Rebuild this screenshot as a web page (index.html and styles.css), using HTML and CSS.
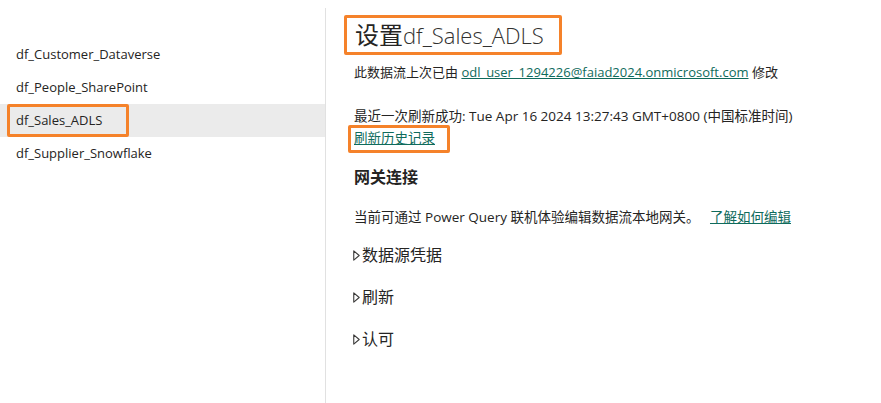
FILE: index.html
```html
<!DOCTYPE html>
<html lang="zh">
<head>
<meta charset="utf-8">
<link rel="stylesheet" href="styles.css">
</head>
<body>
<div class="page">
  <nav class="sidebar">
    <div class="item">df_Customer_Dataverse</div>
    <div class="item">df_People_SharePoint</div>
    <div class="item selected"><span class="hl">df_Sales_ADLS</span></div>
    <div class="item">df_Supplier_Snowflake</div>
  </nav>
  <main class="content">
    <h1 class="title"><span class="hl-title"><span class="cjk">设置</span><span class="latin">df_Sales_ADLS</span></span></h1>
    <p class="meta">此数据流上次已由 <a class="link" href="#">odl_user_1294226@faiad2024.onmicrosoft.com</a> 修改</p>
    <p class="refresh">最近一次刷新成功: Tue Apr 16 2024 13:27:43 GMT+0800 (中国标准时间)</p>
    <div class="history"><span class="hl-link"><a class="link" href="#">刷新历史记录</a></span></div>
    <h2 class="section">网关连接</h2>
    <p class="gateway">当前可通过 Power Query 联机体验编辑数据流本地网关。 <a class="link learn" href="#">了解如何编辑</a></p>
    <div class="expander"><svg class="caret" width="7" height="11" viewBox="0 0 7 11"><polygon points="0.75,0.9 6.2,5.5 0.75,10.1" fill="none" stroke="#3b3a39" stroke-width="1.1" stroke-linejoin="round"/></svg>数据源凭据</div>
    <div class="expander"><svg class="caret" width="7" height="11" viewBox="0 0 7 11"><polygon points="0.75,0.9 6.2,5.5 0.75,10.1" fill="none" stroke="#3b3a39" stroke-width="1.1" stroke-linejoin="round"/></svg>刷新</div>
    <div class="expander"><svg class="caret" width="7" height="11" viewBox="0 0 7 11"><polygon points="0.75,0.9 6.2,5.5 0.75,10.1" fill="none" stroke="#3b3a39" stroke-width="1.1" stroke-linejoin="round"/></svg>认可</div>
  </main>
</div>
</body>
</html>
```
FILE: styles.css
```css
html, body {
  margin: 0;
  padding: 0;
  background: #ffffff;
}
body {
  font-family: "Open Sans", "Noto Sans CJK SC", sans-serif;
  color: #252423;
  font-size: 13px;
}
.page {
  display: flex;
  padding-top: 8px;
  height: 395px;
}
.sidebar {
  width: 325px;
  border-right: 1px solid #e1e1e1;
  padding-top: 30px;
  flex-shrink: 0;
}
.item {
  height: 33px;
  line-height: 33px;
  padding-left: 16px;
  color: #252423;
}
.item.selected {
  background: #ebebeb;
  padding-left: 7px;
  height: 33px;
}
.hl {
  display: inline-block;
  height: 27px;
  line-height: 27px;
  padding: 0 24px 0 6px;
  border: 3px solid #f5822a;
  border-radius: 2px;
  vertical-align: top;
}
.content {
  padding-left: 18px;
  flex: 1;
  font-size: 13.5px;
}
.title {
  margin: 7px 0 0 0;
  font-size: 24px;
  font-weight: 400;
  line-height: 32px;
}
.hl-title {
  display: inline-block;
  padding: 1px 15px 1px 8px;
  border: 3px solid #f5822a;
  border-radius: 2px;
}
.cjk {
  color: #252423;
}
.latin {
  font-size: 22px;
  font-weight: 300;
  color: #323130;
}
.meta {
  margin: 8px 0 0 10px;
  line-height: 18px;
  font-size: 13px;
}
.link {
  color: #0f6b5c;
  text-decoration: underline;
}
.refresh {
  margin: 26px 0 0 10px;
  line-height: 18px;
}
.history {
  margin: 0 0 0 4px;
}
.hl-link {
  display: inline-block;
  padding: 1px 12px 3px 3px;
  border: 3px solid #f5822a;
  border-radius: 2px;
  line-height: 18px;
}
.section {
  margin: 14px 0 0 10px;
  font-size: 16px;
  font-weight: 700;
  line-height: 20px;
}
.gateway {
  margin: 20px 0 0 10px;
  line-height: 20px;
}
.learn {
  margin-left: 7px;
}
.expander {
  display: flex;
  align-items: center;
  margin: 16px 0 0 9px;
  font-size: 16px;
  line-height: 24px;
  height: 24px;
}
.expander + .expander {
  margin-top: 18px;
}
.caret {
  margin-right: 2px;
  flex-shrink: 0;
}
```
